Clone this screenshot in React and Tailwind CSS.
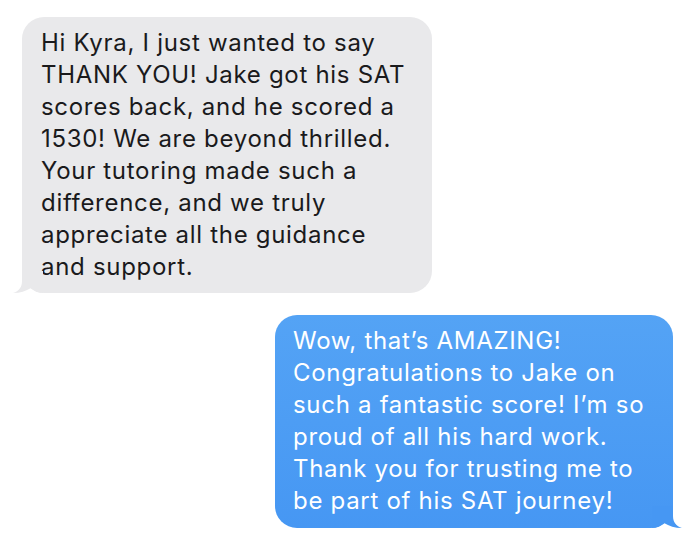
const incoming = [
  "Hi Kyra, I just wanted to say",
  "THANK YOU! Jake got his SAT",
  "scores back, and he scored a",
  "1530! We are beyond thrilled.",
  "Your tutoring made such a",
  "difference, and we truly",
  "appreciate all the guidance",
  "and support.",
];

const outgoing = [
  "Wow, that\u2019s AMAZING!",
  "Congratulations to Jake on",
  "such a fantastic score! I\u2019m so",
  "proud of all his hard work.",
  "Thank you for trusting me to",
  "be part of his SAT journey!",
];

const App = () => {
  return (
    <div
      className="w-[694px] h-[544px] bg-white pt-[17px] pl-[22px] pr-[21px] flex flex-col"
      style={{ fontFamily: "Inter, 'Noto Sans', sans-serif" }}
    >
      {/* received */}
      <div className="relative self-start w-[410px] h-[276px] rounded-[22px] bg-[#e9e9eb] pl-[19px] pt-[10px] text-[24px] leading-[32px] text-[#1a1a1c] tracking-[0.7px]">
        {incoming.map((line) => (
          <div key={line} className="whitespace-nowrap">
            {line}
          </div>
        ))}
        <svg
          className="absolute -left-[9px] bottom-0"
          width="30"
          height="22"
          viewBox="0 0 30 22"
        >
          <path
            d="M9 0 L9 10 C9 16 6 20 0 22 C7 22 13 20 18 17 C21 20 25 22 30 22 L30 0 Z"
            fill="#e9e9eb"
          />
        </svg>
      </div>

      {/* sent */}
      <div className="relative self-end mt-[22px] w-[398px] h-[213px] rounded-[22px] bg-linear-to-b from-[#54a3f5] to-[#4697f3] pl-[18px] pt-[10px] text-[24px] leading-[32px] text-white tracking-[0.7px]">
        {outgoing.map((line) => (
          <div key={line} className="whitespace-nowrap">
            {line}
          </div>
        ))}
        <svg
          className="absolute -right-[9px] bottom-0"
          width="30"
          height="22"
          viewBox="0 0 30 22"
        >
          <path
            d="M21 0 L21 10 C21 16 24 20 30 22 C23 22 17 20 12 17 C9 20 5 22 0 22 L0 0 Z"
            fill="#4697f3"
          />
        </svg>
      </div>
    </div>
  );
};

export default App;
